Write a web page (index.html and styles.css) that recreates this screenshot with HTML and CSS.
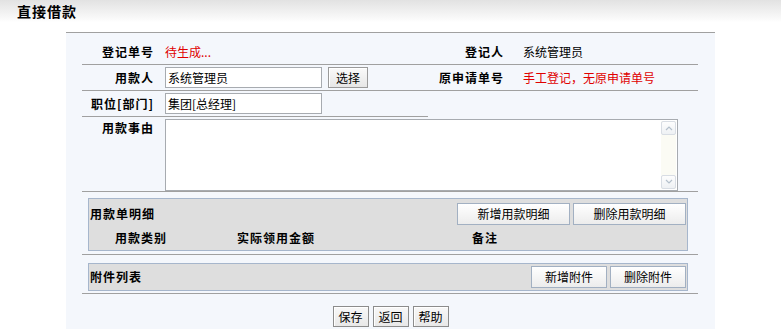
FILE: index.html
```html
<!DOCTYPE html>
<html lang="zh-CN">
<head>
    <meta charset="UTF-8">
    <title>直接借款</title>
    <link rel="stylesheet" href="styles.css">
</head>
<body>
    <div class="title-bar">
        <h1 class="page-title">直接借款</h1>
    </div>
    <div class="panel">
        <div class="form">
            <div class="row row-first">
                <div class="label">登记单号</div>
                <div class="value red">待生成...</div>
                <div class="label label-right">登记人</div>
                <div class="value value-right">系统管理员</div>
            </div>
            <div class="row">
                <div class="label">用款人</div>
                <div class="value">
                    <input class="text-input" type="text" value="系统管理员">
                    <button class="btn btn-select">选择</button>
                </div>
                <div class="label label-right">原申请单号</div>
                <div class="value value-right red">手工登记，无原申请单号</div>
            </div>
            <div class="row row-short">
                <div class="label">职位[部门]</div>
                <div class="value">
                    <input class="text-input" type="text" value="集团[总经理]">
                </div>
            </div>
            <div class="row row-memo">
                <div class="label">用款事由</div>
                <div class="value">
                    <div class="memo-box">
                        <textarea class="memo"></textarea>
                        <div class="scrollbar">
                            <span class="arrow">
                                <svg width="8" height="6" viewBox="0 0 8 6"><path d="M1 5 L4 2 L7 5" fill="none" stroke="#b4c0cc" stroke-width="1.2"/></svg>
                            </span>
                            <span class="arrow">
                                <svg width="8" height="6" viewBox="0 0 8 6"><path d="M1 1 L4 4 L7 1" fill="none" stroke="#b4c0cc" stroke-width="1.2"/></svg>
                            </span>
                        </div>
                    </div>
                </div>
            </div>
        </div>

        <div class="section section-detail">
            <div class="section-box">
                <div class="section-head">
                    <span class="section-title">用款单明细</span>
                    <div class="actions">
                        <button class="btn btn-box btn-wide">新增用款明细</button>
                        <button class="btn btn-box btn-wide">删除用款明细</button>
                    </div>
                </div>
                <div class="detail-cols">
                    <span>用款类别</span>
                    <span>实际领用金额</span>
                    <span>备注</span>
                </div>
            </div>
        </div>

        <div class="section section-files">
            <div class="section-box">
                <div class="section-head section-head-files">
                    <span class="section-title">附件列表</span>
                    <div class="actions">
                        <button class="btn btn-box btn-mid">新增附件</button>
                        <button class="btn btn-box btn-mid">删除附件</button>
                    </div>
                </div>
            </div>
        </div>

        <div class="footer">
            <button class="btn btn-foot">保存</button>
            <button class="btn btn-foot">返回</button>
            <button class="btn btn-foot">帮助</button>
        </div>
    </div>
</body>
</html>
```

FILE: styles.css
```css
body {
    margin: 0;
    background: #fff;
    font-family: "Noto Sans CJK SC", "DejaVu Sans", sans-serif;
    font-size: 12px;
    line-height: 14px;
    color: #000;
}
.title-bar {
    height: 22px;
    margin-bottom: 10px;
    background: linear-gradient(#e2e2e2, #fbfbfb 90%, #fff);
    display: flex;
    align-items: center;
}
.page-title {
    margin: 0 0 0 17px;
    font-size: 14px;
    font-weight: bold;
    letter-spacing: 1px;
    line-height: 16px;
}
.panel {
    margin-left: 66px;
    width: 649px;
    height: 296px;
    border-top: 1px solid #a0a0a0;
    background: #f4f7fc;
}
.form {
    margin-left: 16px;
    width: 616px;
}
.row {
    display: grid;
    grid-template-columns: 76px 270px 85px 1fr;
    align-items: center;
    height: 25px;
    border-bottom: 1px solid #a0a0a0;
}
.row-first {
    height: 25px;
    padding-top: 6px;
}
.row-short {
    width: 346px;
    grid-template-columns: 76px 1fr;
}
.row-memo {
    height: 74px;
    grid-template-columns: 76px 1fr;
    align-items: start;
}
.label {
    text-align: right;
    font-weight: bold;
    letter-spacing: 1px;
    padding-right: 4px;
}
.row-memo .label {
    padding-top: 4px;
}
.label-right {
    padding-right: 9px;
}
.value {
    padding-left: 7px;
    display: flex;
    align-items: center;
    gap: 6px;
}
.value-right {
    padding-left: 10px;
}
.red {
    color: #e00000;
}
.text-input {
    box-sizing: border-box;
    width: 157px;
    height: 21px;
    margin: 0;
    padding: 0 2px;
    border: 1px solid #a7abb0;
    background: #fff;
    font: inherit;
    color: #000;
}
.memo-box {
    margin-top: 2px;
    width: 511px;
    height: 70px;
    border: 1px solid #a7abb0;
    background: #fff;
    display: flex;
}
.memo {
    flex: 1;
    border: none;
    margin: 0;
    padding: 2px;
    resize: none;
    outline: none;
    font: inherit;
}
.scrollbar {
    width: 15px;
    margin: 1px 1px 1px 0;
    background: #fbfbf4;
    display: flex;
    flex-direction: column;
    justify-content: space-between;
}
.arrow {
    box-sizing: border-box;
    height: 14px;
    border: 1px solid #d8dde4;
    border-radius: 2px;
    background: linear-gradient(#fdfdfd, #eef1f4);
    display: flex;
    align-items: center;
    justify-content: center;
}
.btn {
    box-sizing: border-box;
    margin: 0;
    padding: 0;
    font: inherit;
    color: #000;
    cursor: pointer;
}
.btn-select {
    width: 40px;
    height: 21px;
    border: 1px solid #9a9a9a;
    background: linear-gradient(#fafafa, #e6e6e6);
    box-shadow: inset 1px 1px 0 #fff;
}
.section {
    margin-left: 16px;
    width: 616px;
    border-bottom: 1px solid #a0a0a0;
}
.section-detail {
    padding: 6px 0 3px;
}
.section-files {
    padding: 8px 0 2px;
}
.section-box {
    margin-left: 6px;
    width: 600px;
    box-sizing: border-box;
    border: 1px solid #a6b6cc;
    background: #dedede;
}
.section-head {
    display: flex;
    align-items: center;
    justify-content: space-between;
    padding: 4px 1px 0 1px;
}
.section-head-files {
    padding: 2px 1px 2px 1px;
}
.section-title {
    font-weight: bold;
    letter-spacing: 1px;
}
.actions {
    display: flex;
    gap: 3px;
}
.btn-box {
    height: 22px;
    border: 1px solid #a2b0c2;
    background: linear-gradient(#ffffff, #ececec);
}
.btn-wide {
    width: 113px;
}
.btn-mid {
    width: 76px;
}
.detail-cols {
    display: grid;
    grid-template-columns: 104px 166px 252px;
    height: 25px;
    align-items: center;
    font-weight: bold;
    letter-spacing: 1px;
    text-align: center;
}
.footer {
    padding-top: 12px;
    display: flex;
    justify-content: center;
    gap: 4px;
}
.btn-foot {
    width: 36px;
    height: 21px;
    border: 1px solid #8c8c8c;
    background: linear-gradient(#f8f8f8, #e8e8e8);
    box-shadow: inset 1px 1px 0 #fff;
}
```
